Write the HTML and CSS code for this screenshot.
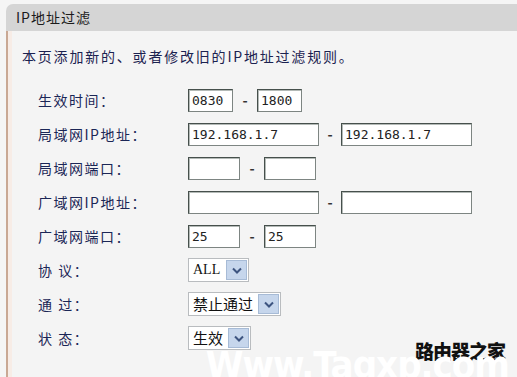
FILE: index.html
```html
<!DOCTYPE html>
<html lang="zh-CN">
<head>
    <meta charset="UTF-8">
    <title>IP地址过滤</title>
    <link rel="stylesheet" href="styles.css">
</head>
<body>
    <div class="panel">
        <div class="panel-head">IP地址过滤</div>
        <div class="panel-body">
            <p class="intro">本页添加新的、或者修改旧的IP地址过滤规则。</p>
            <div class="form">
                <div class="row">
                    <span class="label">生效时间：</span>
                    <input class="box time" type="text" value="0830">
                    <span class="dash">-</span>
                    <input class="box time" type="text" value="1800">
                </div>
                <div class="row">
                    <span class="label">局域网IP地址：</span>
                    <input class="box ip" type="text" value="192.168.1.7">
                    <span class="dash">-</span>
                    <input class="box ip" type="text" value="192.168.1.7">
                </div>
                <div class="row">
                    <span class="label">局域网端口：</span>
                    <input class="box port" type="text" value="">
                    <span class="dash">-</span>
                    <input class="box port" type="text" value="">
                </div>
                <div class="row">
                    <span class="label">广域网IP地址：</span>
                    <input class="box ip" type="text" value="">
                    <span class="dash">-</span>
                    <input class="box ip" type="text" value="">
                </div>
                <div class="row">
                    <span class="label">广域网端口：</span>
                    <input class="box port" type="text" value="25">
                    <span class="dash">-</span>
                    <input class="box port" type="text" value="25">
                </div>
                <div class="row">
                    <span class="label">协 议：</span>
                    <span class="select">
                        <span class="value latin">ALL</span>
                        <span class="arrow"><svg width="10" height="7" viewBox="0 0 10 7"><path d="M1 1.5 L5 5.5 L9 1.5" fill="none" stroke="#3d5480" stroke-width="2"/></svg></span>
                    </span>
                </div>
                <div class="row">
                    <span class="label">通 过：</span>
                    <span class="select">
                        <span class="value">禁止通过</span>
                        <span class="arrow"><svg width="10" height="7" viewBox="0 0 10 7"><path d="M1 1.5 L5 5.5 L9 1.5" fill="none" stroke="#3d5480" stroke-width="2"/></svg></span>
                    </span>
                </div>
                <div class="row">
                    <span class="label">状 态：</span>
                    <span class="select">
                        <span class="value">生效</span>
                        <span class="arrow"><svg width="10" height="7" viewBox="0 0 10 7"><path d="M1 1.5 L5 5.5 L9 1.5" fill="none" stroke="#3d5480" stroke-width="2"/></svg></span>
                    </span>
                </div>
            </div>
        </div>
    </div>
    <div class="mark">
        <span class="mark-cn">路由器之家</span>
        <span class="mark-en">Www.Tagxp.com</span>
    </div>
</body>
</html>
```

FILE: styles.css
```css
body {
    margin: 0;
    background-color: #f5f5f5;
    font-family: "Noto Sans CJK SC", "Liberation Sans", sans-serif;
    height: 377px;
    overflow: hidden;
    position: relative;
}
.panel {
    margin: 4px 0 0 6px;
}
.panel-head {
    height: 27px;
    line-height: 27px;
    background-color: #d5d5d5;
    border-top-left-radius: 7px;
    padding-left: 10px;
    font-size: 14px;
    letter-spacing: 1px;
    color: #1b1b1b;
}
.panel-body {
    border-left: 2px solid #c9a894;
    box-shadow: inset 4px 0 0 #f7ece6;
    background-color: #f4f4f4;
    padding: 15px 0 30px 14px;
}
.intro {
    margin: 0;
    height: 20px;
    line-height: 20px;
    font-size: 14px;
    letter-spacing: 1.8px;
    color: #1b2250;
}
.form {
    margin-top: 17px;
    padding-left: 16px;
}
.row {
    display: flex;
    align-items: center;
    height: 34px;
}
.label {
    width: 150px;
    font-size: 14px;
    letter-spacing: 1.5px;
    color: #1b2656;
    white-space: pre;
}
.box {
    box-sizing: border-box;
    height: 23px;
    margin: 0;
    padding: 0 3px;
    border: 1px solid #46504c;
    border-right-color: #7d8582;
    border-bottom-color: #7d8582;
    box-shadow: inset 1px 1px 0 #b4bab7;
    background-color: #ffffff;
    font-family: "DejaVu Sans Mono", monospace;
    font-size: 13px;
    color: #222;
    outline: none;
}
.time {
    width: 45px;
}
.ip {
    width: 131px;
}
.port {
    width: 52px;
}
.dash {
    width: 24px;
    text-align: center;
    font-size: 14px;
    font-weight: bold;
    color: #333;
}
.ip + .dash {
    width: 22px;
}
.select {
    display: inline-flex;
    align-items: stretch;
    height: 24px;
    box-sizing: border-box;
    border: 1px solid #b9bcbf;
    background-color: #ffffff;
}
.select .value {
    padding: 0 4px 0 4px;
    line-height: 22px;
    font-size: 15px;
    color: #111;
}
.select .latin {
    font-family: "Liberation Serif", serif;
    font-size: 14px;
    padding-right: 5px;
}
.select .arrow {
    width: 19px;
    margin: 1px;
    display: flex;
    align-items: center;
    justify-content: center;
    background-color: #c6d6ec;
    border: 1px solid #a7bbd6;
}
.mark {
    position: absolute;
    right: 8px;
    bottom: -10px;
    width: 215px;
    height: 50px;
}
.mark-cn {
    position: absolute;
    right: 4px;
    top: 0;
    font-size: 19px;
    font-weight: 900;
    color: #111;
    letter-spacing: -1px;
}
.mark-en {
    position: absolute;
    right: 0;
    top: 6px;
    font-family: "Liberation Sans Narrow", "DejaVu Sans Condensed", sans-serif;
    font-size: 38px;
    font-weight: bold;
    color: #ffffff;
    letter-spacing: -1px;
}
```
